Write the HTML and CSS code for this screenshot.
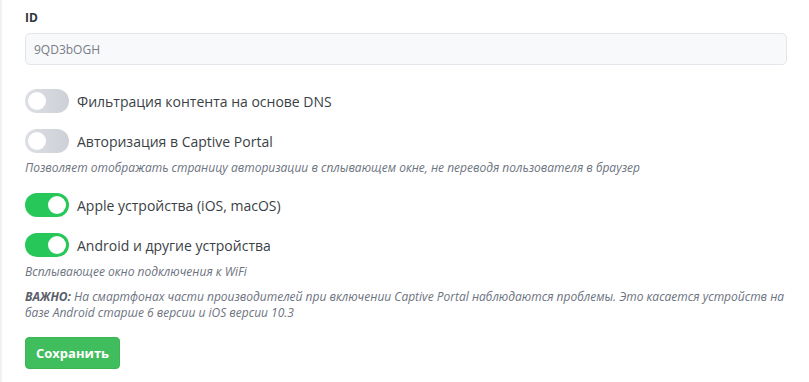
FILE: index.html
```html
<!DOCTYPE html>
<html lang="en">
<head>
    <meta charset="UTF-8">
    <title>Captive Portal</title>
    <link rel="stylesheet" href="styles.css">
</head>
<body>
    <div class="settings">
        <label class="field-label" for="id">ID</label>
        <input class="field-input" type="text" id="id" value="9QD3bOGH" readonly>

        <div class="switch-row first">
            <span class="switch"></span>
            <span class="switch-text">Фильтрация контента на основе DNS</span>
        </div>
        <div class="switch-row">
            <span class="switch"></span>
            <span class="switch-text">Авторизация в Captive Portal</span>
        </div>
        <p class="hint">Позволяет отображать страницу авторизации в сплывающем окне, не переводя пользователя в браузер</p>

        <div class="switch-row after-hint">
            <span class="switch on"></span>
            <span class="switch-text">Apple устройства (iOS, macOS)</span>
        </div>
        <div class="switch-row">
            <span class="switch on"></span>
            <span class="switch-text">Android и другие устройства</span>
        </div>
        <p class="hint">Всплывающее окно подключения к WiFi</p>
        <p class="hint warning"><strong>ВАЖНО:</strong> На смартфонах части производителей при включении Captive Portal наблюдаются проблемы. Это касается устройств на базе Android старше 6 версии и iOS версии 10.3</p>

        <button class="button-save">Сохранить</button>
    </div>
</body>
</html>
```

FILE: styles.css
```css
body, html {
    margin: 0;
    padding: 0;
    background: #fff;
    font-family: 'Open Sans', sans-serif;
    color: #3a3f45;
}

.settings {
    border-left: 2px solid #f1f2f4;
    padding: 10px 22px 14px 23px;
    min-height: 358px;
    display: flex;
    flex-direction: column;
    align-items: flex-start;
}

.field-label {
    font-size: 12px;
    font-weight: 700;
    line-height: 16px;
    color: #2f343a;
}

.field-input {
    box-sizing: border-box;
    width: 100%;
    height: 32px;
    margin-top: 7px;
    padding: 0 8px;
    border: 1px solid #e2e5ea;
    border-radius: 5px;
    background: #f8f9fb;
    font-family: 'Open Sans', sans-serif;
    font-size: 12px;
    color: #777c85;
    outline: none;
}

.switch-row {
    display: flex;
    align-items: center;
    gap: 8px;
    margin-top: 16px;
    height: 24px;
}

.switch-row.first {
    margin-top: 24px;
}

.switch-row.after-hint {
    margin-top: 17px;
}

.switch {
    position: relative;
    width: 44px;
    height: 24px;
    border-radius: 12px;
    background: linear-gradient(90deg, #dcdfe4, #cdd1d7);
    flex-shrink: 0;
}

.switch::after {
    content: '';
    position: absolute;
    top: 3px;
    left: 3px;
    width: 18px;
    height: 18px;
    border-radius: 50%;
    background: #fff;
}

.switch.on {
    background: #27c75a;
}

.switch.on::after {
    left: 23px;
}

.switch-text {
    font-size: 14px;
    color: #3a3f45;
}

.hint {
    margin: 7px 0 0;
    font-size: 12px;
    line-height: 16px;
    font-style: italic;
    color: #6d7380;
}

.hint.warning {
    margin-top: 9px;
}

.hint strong {
    color: #5a606b;
}

.button-save {
    margin-top: 16px;
    height: 32px;
    padding: 0 10px;
    border: 1px solid #3bb657;
    border-radius: 4px;
    background: #40bd5c;
    color: #fff;
    font-family: 'Open Sans', sans-serif;
    font-size: 13px;
    font-weight: 700;
}
```
